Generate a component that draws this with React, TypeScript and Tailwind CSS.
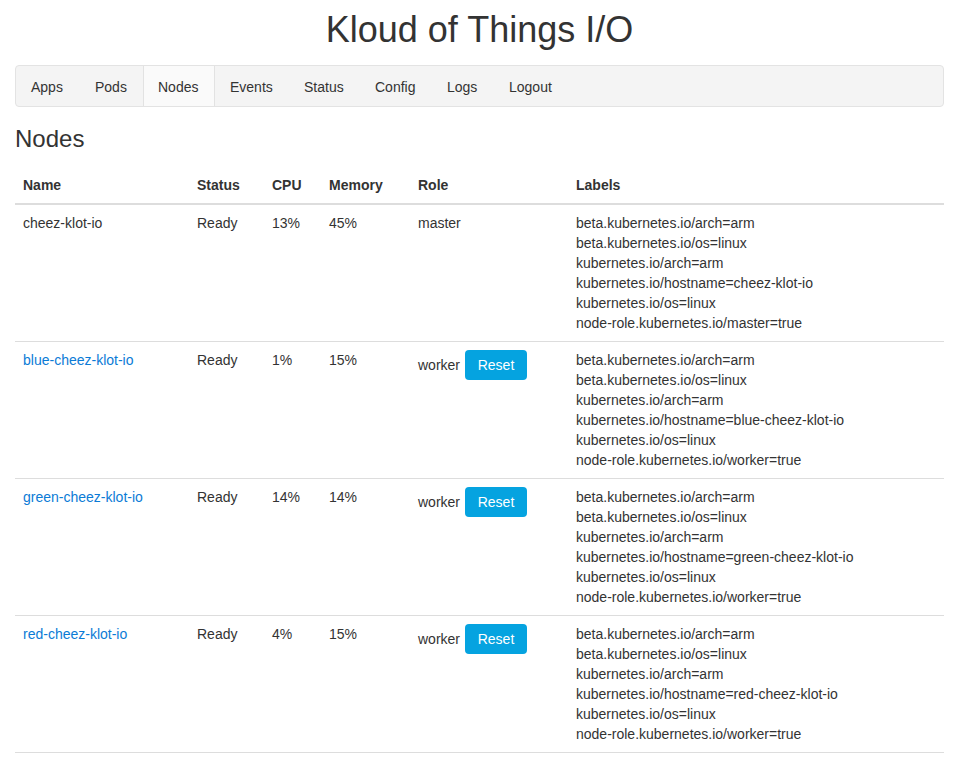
const navItems = [
  { label: "Apps", w: "w-[64px]" },
  { label: "Pods", w: "w-[63px]" },
  { label: "Nodes", w: "w-[72px]" },
  { label: "Events", w: "w-[74px]" },
  { label: "Status", w: "w-[71px]" },
  { label: "Config", w: "w-[72px]" },
  { label: "Logs", w: "w-[62px]" },
  { label: "Logout", w: "w-[74px]" },
];

const labelsFor = (host: string, role: string) => [
  "beta.kubernetes.io/arch=arm",
  "beta.kubernetes.io/os=linux",
  "kubernetes.io/arch=arm",
  `kubernetes.io/hostname=${host}`,
  "kubernetes.io/os=linux",
  `node-role.kubernetes.io/${role}=true`,
];

const nodes = [
  { name: "cheez-klot-io", status: "Ready", cpu: "13%", memory: "45%", role: "master" },
  { name: "blue-cheez-klot-io", status: "Ready", cpu: "1%", memory: "15%", role: "worker" },
  { name: "green-cheez-klot-io", status: "Ready", cpu: "14%", memory: "14%", role: "worker" },
  { name: "red-cheez-klot-io", status: "Ready", cpu: "4%", memory: "15%", role: "worker" },
];

export default function App() {
  return (
    <div
      className="min-h-screen bg-white pl-[15px] pr-[13px] text-[14px] leading-[20px] text-[#333]"
      style={{ fontFamily: '"Liberation Sans", Arial, sans-serif' }}
    >
      <h1 className="pt-[10px] text-center text-[36px] leading-[40px] font-normal">
        Kloud of Things I/O
      </h1>

      <nav className="mt-[15px] flex h-[42px] rounded-[4px] border border-[#e3e3e3] bg-[#f4f4f4]">
        {navItems.map((item) => (
          <a
            key={item.label}
            href="#"
            className={
              item.label === "Nodes"
                ? `block ${item.w} bg-[#fafafa] pt-[11px] pb-[9px] pl-[15px] shadow-[inset_1px_0_0_#e2e2e2,inset_-1px_0_0_#e2e2e2]`
                : `block ${item.w} pt-[11px] pb-[9px] pl-[15px]`
            }
          >
            {item.label}
          </a>
        ))}
      </nav>

      <h3 className="mt-[18px] text-[24px] leading-[27px] font-normal">Nodes</h3>

      <table className="mt-[15px] w-full border-collapse">
        <thead>
          <tr className="text-left">
            <th className="w-[174px] border-b-2 border-[#ddd] p-[8px] font-bold">Name</th>
            <th className="w-[75px] border-b-2 border-[#ddd] p-[8px] font-bold">Status</th>
            <th className="w-[57px] border-b-2 border-[#ddd] p-[8px] font-bold">CPU</th>
            <th className="w-[89px] border-b-2 border-[#ddd] p-[8px] font-bold">Memory</th>
            <th className="w-[158px] border-b-2 border-[#ddd] p-[8px] font-bold">Role</th>
            <th className="border-b-2 border-[#ddd] p-[8px] font-bold">Labels</th>
          </tr>
        </thead>
        <tbody>
          {nodes.map((node, i) => (
            <tr key={node.name} className="border-b border-[#ddd] align-top">
              <td className="p-[8px]">
                {i === 0 ? (
                  node.name
                ) : (
                  <a href="#" className="text-[#0b7bd6]">
                    {node.name}
                  </a>
                )}
              </td>
              <td className="p-[8px]">{node.status}</td>
              <td className="p-[8px]">{node.cpu}</td>
              <td className="p-[8px]">{node.memory}</td>
              <td className="p-[8px]">
                {node.role === "master" ? (
                  node.role
                ) : (
                  <div className="flex items-baseline gap-[5px]">
                    <span>{node.role}</span>
                    <button className="h-[30px] w-[62px] rounded-[4px] bg-[#05a3e0] py-[5px] text-[14px] leading-[20px] text-white">
                      Reset
                    </button>
                  </div>
                )}
              </td>
              <td className="p-[8px]">
                {labelsFor(node.name, node.role).map((label) => (
                  <div key={label}>{label}</div>
                ))}
              </td>
            </tr>
          ))}
        </tbody>
      </table>
    </div>
  );
}
